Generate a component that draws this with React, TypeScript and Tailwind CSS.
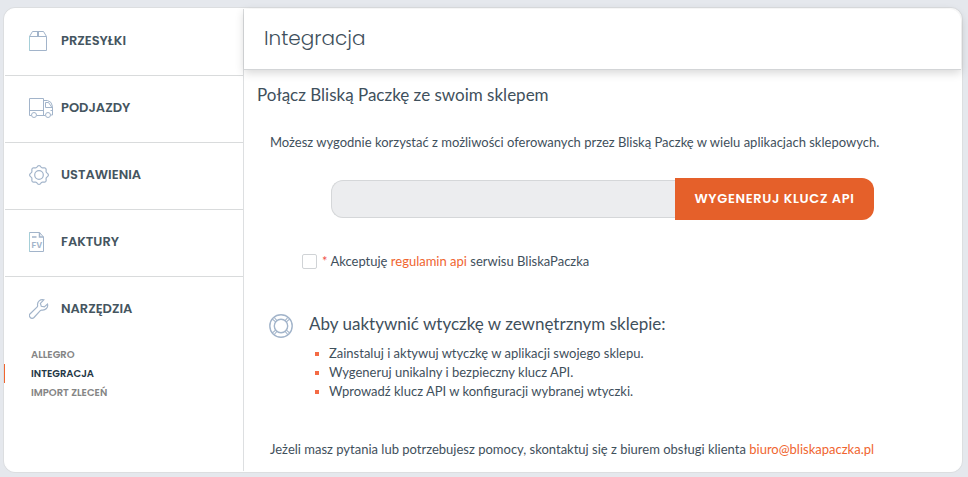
import React from 'react';

const iconProps = {
  fill: 'none',
  stroke: '#a2b4ca',
  strokeWidth: 1,
  'aria-hidden': true,
};

// eight soft teeth around the centre of the gear
const gearPoints = Array.from({ length: 96 }, (_, i) => {
  const angle = (i / 96) * Math.PI * 2;
  const radius = 8.6 + 0.8 * Math.cos(angle * 8);
  return `${(10 + radius * Math.cos(angle)).toFixed(2)},${(10 + radius * Math.sin(angle)).toFixed(2)}`;
}).join(' ');

const BoxIcon: React.FC = () => (
  <svg width="24" height="20" viewBox="0 0 24 20" {...iconProps}>
    <path d="M.5 5.5h17v14H.5zM.5 5.5 3.500 .5h11l3 5M8.500 .5v5M9.500 .5v5" />
    <path d="M.5 19.500v-14" stroke="#a5cfd8" />
  </svg>
);

const TruckIcon: React.FC = () => (
  <svg width="24" height="20" viewBox="0 0 24 20" {...iconProps}>
    <path d="M2 17.500H.5V.5h14v17M.5 12.500h14M8 17.500h8M14.500 2.500h4q4.500 1 5 6v8.500h-2M16.500 9.500v-5h3l3.500 5zM21.500 12.500H23" />
    <circle cx="5" cy="17" r="2.500" fill="white" />
    <circle cx="19" cy="17" r="2.500" fill="white" />
  </svg>
);

const GearIcon: React.FC = () => (
  <svg width="24" height="20" viewBox="0 0 24 20" {...iconProps} strokeWidth={1.200}>
    <circle cx="10" cy="10" r="4.300" />
    <polygon points={gearPoints} />
  </svg>
);

const InvoiceIcon: React.FC = () => (
  <svg width="24" height="20" viewBox="0 0 24 20" {...iconProps}>
    <path d="M.5.5h10l4 4.500v14.500H.5z" />
    <path d="M.5 19.500V.5" stroke="#a5cfd8" />
    <path d="M10.500.5V5h4M3 5h4.500" strokeWidth="1.500" />
    <text x="2.500" y="15.500" fontSize="8" fontWeight="700" fontFamily="Inter, sans-serif" fill="#a2b4ca" stroke="none">FV</text>
  </svg>
);

const WrenchIcon: React.FC = () => (
  <svg width="24" height="20" viewBox="0 0 24 20" {...iconProps} strokeWidth={1.200}>
    <path d="M14.800.9C11.300-.1 8 2.800 8.600 6.300c.1.700-.1 1.300-.6 1.800L1.200 14.700c-2.300 2.500 1.200 6.300 3.800 3.800l6.300-6.800c.5-.5 1.100-.7 1.800-.6 3.400.4 6.300-2.600 5.400-6l-3.200 2.800-3-.6-.9-3z" />
  </svg>
);

const LifebuoyIcon: React.FC = () => (
  <svg className="shrink-0" width="24" height="24" viewBox="0 0 24 24" {...iconProps} strokeWidth={1.400}>
    <circle cx="12" cy="12" r="11.200" />
    <circle cx="12" cy="12" r="6.700" />
    <path d="m3.500 5.200 3.300 3M5.200 3.500l3 3.300M18.800 3.500l-3 3.300M20.500 5.200l-3.300 3M3.500 18.800l3.300-3M5.200 20.500l3-3.300M18.800 20.500l-3-3.300M20.500 18.800l-3.300-3" strokeWidth="1.100" />
  </svg>
);

const menu = [
  { label: 'PRZESYŁKI', icon: BoxIcon },
  { label: 'PODJAZDY', icon: TruckIcon },
  { label: 'USTAWIENIA', icon: GearIcon },
  { label: 'FAKTURY', icon: InvoiceIcon },
  { label: 'NARZĘDZIA', icon: WrenchIcon },
];

const tools = [
  { label: 'ALLEGRO', active: false },
  { label: 'INTEGRACJA', active: true },
  { label: 'IMPORT ZLECEŃ', active: false },
];

const steps = [
  'Zainstaluj i aktywuj wtyczkę w aplikacji swojego sklepu.',
  'Wygeneruj unikalny i bezpieczny klucz API.',
  'Wprowadź klucz API w konfiguracji wybranej wtyczki.',
];

const Sidebar: React.FC = () => (
  <nav className="w-[239px] shrink-0 border-r border-[#dddfe1] font-['Poppins','Inter',sans-serif]">
    <ul>
      {menu.map(({ label, icon: Icon }) => (
        <li key={label} className="border-b border-[#d9dbdc] last:border-b-0">
          <a href="#" className="flex h-[66px] items-center gap-2 pb-0.5 pl-6 text-[13px] font-semibold text-[#455560]">
            <Icon />
            {label}
          </a>
        </li>
      ))}
    </ul>
    <ul className="mt-0.5 -ml-px text-[10px] leading-[19px] font-semibold">
      {tools.map((tool) => (
        <li key={tool.label}>
          <a
            href="#"
            className={
              tool.active
                ? 'block border-l border-[#f0652f] pl-[26px] text-[#243746]'
                : 'block border-l border-transparent pl-[26px] text-[#858585]'
            }
          >
            {tool.label}
          </a>
        </li>
      ))}
    </ul>
  </nav>
);

const Integration: React.FC = () => (
  <main className="min-w-0 flex-1">
    <header className="rounded-tr-xl border-b border-[#d3d5d7] px-5 pt-[13px] pb-[15px] shadow-[0_3px_10px_rgba(0,0,0,0.16)]">
      <h1 className="font-['Poppins','Inter',sans-serif] text-[20px] leading-8 font-light">Integracja</h1>
    </header>

    <div className="pt-[13px] pb-3">
      <h2 className="px-[13px] text-[17px] leading-6">Połącz Bliską Paczkę ze swoim sklepem</h2>
      <p className="mt-[25px] px-[26px] leading-5">
        Możesz wygodnie korzystać z możliwości oferowanych przez Bliską Paczkę w wielu aplikacjach sklepowych.
      </p>

      <form onSubmit={(e) => e.preventDefault()}>
        <div className="mt-[26px] flex items-center px-[87px]">
          <input
            type="text"
            readOnly
            aria-label="Klucz API"
            className="h-[38px] min-w-0 flex-1 rounded-l-xl border border-r-0 border-[#d5d7d9] bg-[#ecedef] px-3 outline-none"
          />
          <button
            type="submit"
            className="h-[42px] w-[199px] shrink-0 rounded-r-xl bg-[#e5602a] font-['Poppins','Inter',sans-serif] text-[13px] font-semibold tracking-wider text-white"
          >
            WYGENERUJ KLUCZ API
          </button>
        </div>

        <div className="mt-[31px] flex items-center gap-[5px] px-[58px] leading-5">
          <input
            id="terms"
            type="checkbox"
            className="size-[15px] shrink-0 appearance-none rounded-xs border border-[#d0d3d6] bg-white checked:bg-[#e5602a]"
          />
          <label htmlFor="terms">
            <span className="text-[#f0524a]">*</span> Akceptuję{' '}
            <a href="#" className="text-[#f0652f]">regulamin api</a> serwisu BliskaPaczka
          </label>
        </div>
      </form>

      <section className="mt-[41px] flex items-start gap-4 px-[25px]">
        <div className="pt-0.5">
          <LifebuoyIcon />
        </div>
        <div>
          <h3 className="text-[17px] leading-6">Aby uaktywnić wtyczkę w zewnętrznym sklepie:</h3>
          <ul className="mt-2 leading-[19px]">
            {steps.map((step) => (
              <li key={step} className="flex items-center gap-[10px] pl-1.5">
                <span className="size-1 bg-[#f46b45]" />
                {step}
              </li>
            ))}
          </ul>
        </div>
      </section>

      <p className="mt-[38px] px-[26px] leading-5">
        Jeżeli masz pytania lub potrzebujesz pomocy, skontaktuj się z biurem obsługi klienta{' '}
        <a href="mailto:biuro@bliskapaczka.pl" className="text-[#f0652f]">biuro@bliskapaczka.pl</a>
      </p>
    </div>
  </main>
);

const App: React.FC = () => {
  return (
    <div className="min-h-screen bg-[#e5e8ed] pt-[7px] pr-[5px] pb-[5px] pl-[3px] font-['Lato',sans-serif] text-[13px] text-[#3f505c]">
      <div className="rounded-xl border border-[#dcdee0]">
        <div className="flex rounded-[11px] border border-white bg-white">
          <Sidebar />
          <Integration />
        </div>
      </div>
    </div>
  );
};

export default App;
